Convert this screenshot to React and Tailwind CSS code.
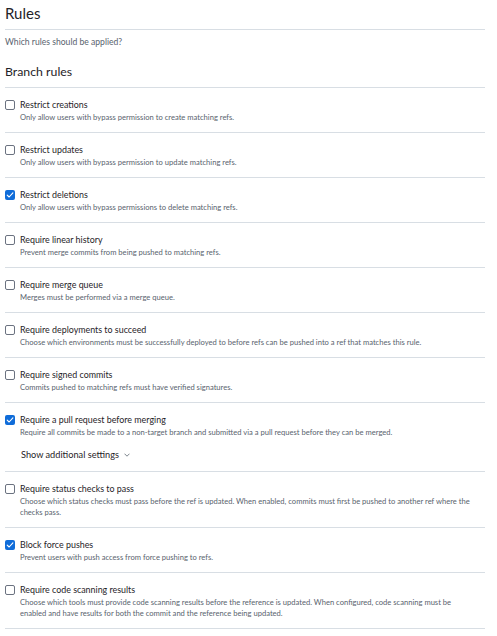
import React from "react";

const rules = [
  { t: "Restrict creations", d: "Only allow users with bypass permission to create matching refs." },
  { t: "Restrict updates", d: "Only allow users with bypass permission to update matching refs." },
  { t: "Restrict deletions", d: "Only allow users with bypass permissions to delete matching refs.", c: true },
  { t: "Require linear history", d: "Prevent merge commits from being pushed to matching refs." },
  { t: "Require merge queue", d: "Merges must be performed via a merge queue." },
  { t: "Require deployments to succeed", d: "Choose which environments must be successfully deployed to before refs can be pushed into a ref that matches this rule." },
  { t: "Require signed commits", d: "Commits pushed to matching refs must have verified signatures." },
  { t: "Require a pull request before merging", d: "Require all commits be made to a non-target branch and submitted via a pull request before they can be merged.", c: true, more: true },
  { t: "Require status checks to pass", d: "Choose which status checks must pass before the ref is updated. When enabled, commits must first be pushed to another ref where the checks pass." },
  { t: "Block force pushes", d: "Prevent users with push access from force pushing to refs.", c: true },
  { t: "Require code scanning results", d: "Choose which tools must provide code scanning results before the reference is updated. When configured, code scanning must be enabled and have results for both the commit and the reference being updated." },
];

function Box({ checked }) {
  if (checked) {
    return (
      <div className="mt-[2px] w-[10px] h-[10px] shrink-0 rounded-[2px] bg-[#0f6cd9] flex items-center justify-center">
        <svg width="8" height="8" viewBox="0 0 8 8" fill="none">
          <path d="M1.2 4.2 L3.1 6 L6.9 1.8" stroke="white" strokeWidth="1.1" strokeLinecap="round" strokeLinejoin="round" />
        </svg>
      </div>
    );
  }
  return <div className="mt-[2px] w-[10px] h-[10px] shrink-0 rounded-[2px] border border-[#6b7280] bg-white" />;
}

export default function App() {
  return (
    <div
      className="w-[497px] h-[636px] overflow-hidden bg-white pl-[5px] pr-[12px] text-[#1f2328]"
      style={{ fontFamily: "Lato, 'Noto Sans', sans-serif" }}
    >
      <h2 className="text-[15px] leading-[22px] pt-[2px] pb-[5px] border-b border-[#d8dee4] font-normal">Rules</h2>
      <p className="mt-[6px] text-[8.6px] leading-[13px] text-[#59636e]">Which rules should be applied?</p>
      <h3 className="mt-[14px] text-[12.3px] leading-[18px] pb-[6px] border-b border-[#d8dee4] font-normal">Branch rules</h3>
      {rules.map((r) => (
        <div key={r.t} className="flex gap-[5px] pt-[10px] pb-[9px] border-b border-[#d8dee4]">
          <Box checked={r.c} />
          <div className="flex-1 pr-[11px]">
            <div className="text-[8.9px] leading-[14px] text-[#1f2328]">{r.t}</div>
            <div className="text-[7.6px] leading-[11px] text-[#59636e]">{r.d}</div>
            {r.more && (
              <div className="mt-[10px] pl-[1px] flex items-center gap-[5px] text-[9.2px] leading-[14px] text-[#1f2328]">
                <span>Show additional settings</span>
                <svg width="6" height="4" viewBox="0 0 6 4" fill="none">
                  <path d="M0.5 0.7 L3 3.2 L5.5 0.7" stroke="#59636e" strokeWidth="0.8" />
                </svg>
              </div>
            )}
          </div>
        </div>
      ))}
    </div>
  );
}
